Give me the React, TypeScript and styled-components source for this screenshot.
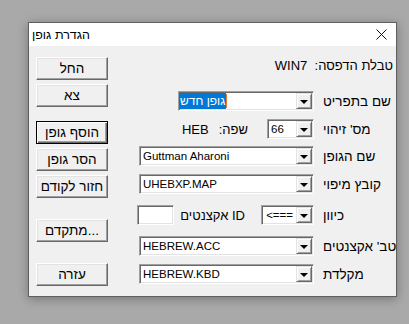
import React from "react"
import styled, { createGlobalStyle } from "styled-components"

const GlobalStyle = createGlobalStyle`
  html, body {
    margin: 0;
    padding: 0;
  }
  body {
    width: 409px;
    height: 324px;
    overflow: hidden;
    background: #a9a9a9;
    font-family: "Liberation Sans", "DejaVu Sans", sans-serif;
    color: #000;
  }
`

const Screen = styled.div`
  padding: 22px 0 0 28px;
`

const Dialog = styled.div`
  width: 369px;
  height: 275px;
  box-sizing: border-box;
  border: 1px solid #5f5f5f;
  background: #f0f0f0;
  box-shadow: 0 2px 10px rgba(0, 0, 0, 0.3);
  display: flex;
  flex-direction: column;
`

const TitleBar = styled.div`
  height: 23px;
  flex-shrink: 0;
  background: #fff;
  display: flex;
  align-items: center;
  justify-content: space-between;
  padding: 0 9px 0 3px;
`

const Title = styled.span`
  font-size: 12.5px;
`

const CloseIcon = () => (
  <svg width="11" height="11" viewBox="0 0 11 11">
    <path d="M0.5 0.5 L10.5 10.5 M10.5 0.5 L0.5 10.5" stroke="#111" strokeWidth="1" />
  </svg>
)

const Body = styled.div`
  flex: 1;
  display: flex;
`

const ButtonColumn = styled.div`
  width: 110px;
  box-sizing: border-box;
  padding: 0 0 0 7px;
  display: flex;
  flex-direction: column;
`

const Button = styled.button<{ $gap: number; $default?: boolean }>`
  width: 72px;
  height: 23px;
  margin-top: ${p => p.$gap}px;
  padding: 0;
  box-sizing: border-box;
  background: #f0f0f0;
  font-family: inherit;
  font-size: 13.5px;
  font-weight: normal;
  color: #000;
  border-style: solid;
  border-width: 1px;
  border-color: ${p => (p.$default ? "#000" : "#fff #696969 #696969 #fff")};
  box-shadow: ${p =>
    p.$default
      ? "inset 1px 1px #fff, inset -1px -1px #696969, inset -2px -2px #a0a0a0"
      : "inset -1px -1px #a0a0a0, inset 1px 1px #e3e3e3"};
`

const FormColumn = styled.div`
  flex: 1;
  box-sizing: border-box;
  padding-right: 3px;
  display: flex;
  flex-direction: column;
`

const Row = styled.div<{ $gap: number }>`
  height: 20px;
  margin-top: ${p => p.$gap}px;
  display: flex;
  align-items: center;
  justify-content: flex-end;
`

const Static = styled.span<{ $space?: number }>`
  font-size: 13px;
  white-space: nowrap;
  margin-right: ${p => p.$space ?? 0}px;
`

const Label = styled.span`
  width: 70px;
  margin-left: 9px;
  font-size: 13.5px;
  white-space: nowrap;
`

const Field = styled.div<{ $width: number; $space?: number }>`
  width: ${p => p.$width}px;
  height: 20px;
  margin-right: ${p => p.$space ?? 0}px;
  box-sizing: border-box;
  display: flex;
  align-items: center;
  background: #fff;
  border: 1px solid;
  border-color: #a0a0a0 #fff #fff #a0a0a0;
  box-shadow: inset 1px 1px #696969, inset -1px -1px #e3e3e3;
`

const FieldText = styled.span<{ $right?: boolean }>`
  flex: 1;
  padding: 0 ${p => (p.$right ? "3px" : "0")} 0 3px;
  text-align: ${p => (p.$right ? "right" : "left")};
  font-size: 11.5px;
  white-space: nowrap;
  overflow: hidden;
`

const EditArea = styled.div`
  flex: 1;
  display: flex;
  align-items: center;
`

const Selected = styled.span`
  background: #0078d7;
  color: #fff;
  padding: 1px;
  font-size: 12px;
  white-space: nowrap;
`

const Caret = styled.span`
  flex: 1;
  height: 14px;
  border-left: 1px solid #e07a2c;
`

const DropButton = styled.div`
  width: 16px;
  height: 16px;
  margin-right: 1px;
  box-sizing: border-box;
  background: #f0f0f0;
  border: 1px solid;
  border-color: #e3e3e3 #696969 #696969 #e3e3e3;
  box-shadow: inset 1px 1px #fff, inset -1px -1px #a0a0a0;
  display: flex;
  align-items: center;
  justify-content: center;
`

const Arrow = styled.span`
  width: 0;
  height: 0;
  margin-top: 1px;
  border-left: 4px solid transparent;
  border-right: 4px solid transparent;
  border-top: 4px solid #000;
`

interface ICombo {
  width: number
  value?: string
  right?: boolean
  space?: number
}
const Combo = ({ width, value, right, space }: ICombo) => (
  <Field $width={width} $space={space}>
    <FieldText $right={right}>{value}</FieldText>
    <DropButton>
      <Arrow />
    </DropButton>
  </Field>
)

export default function App() {
  return (
    <Screen>
      <GlobalStyle />
      <Dialog>
        <TitleBar>
          <Title>הגדרת גופן</Title>
          <CloseIcon />
        </TitleBar>
        <Body>
          <ButtonColumn>
            <Button $gap={11}>החל</Button>
            <Button $gap={4}>צא</Button>
            <Button $gap={14} $default>הוסף גופן</Button>
            <Button $gap={4}>הסר גופן</Button>
            <Button $gap={4}>חזור לקודם</Button>
            <Button $gap={21}>מתקדם...</Button>
            <Button $gap={21}>עזרה</Button>
          </ButtonColumn>
          <FormColumn>
            <Row $gap={9}>
              <Static dir="rtl">טבלת הדפסה:&nbsp;&nbsp;WIN7</Static>
            </Row>
            <Row $gap={16}>
              <Field $width={136}>
                <EditArea>
                  <Selected>גופן חדש</Selected>
                  <Caret />
                </EditArea>
                <DropButton>
                  <Arrow />
                </DropButton>
              </Field>
              <Label>שם בתפריט</Label>
            </Row>
            <Row $gap={8}>
              <Static $space={10}>HEB</Static>
              <Static dir="rtl" $space={19}>שפה:</Static>
              <Combo width={47} value="66" />
              <Label>מס' זיהוי</Label>
            </Row>
            <Row $gap={7}>
              <Combo width={175} value="Guttman Aharoni" />
              <Label>שם הגופן</Label>
            </Row>
            <Row $gap={8}>
              <Combo width={175} value="UHEBXP.MAP" />
              <Label>קובץ מיפוי</Label>
            </Row>
            <Row $gap={11}>
              <Field $width={37} $space={6} />
              <Static dir="rtl" $space={16}>ID אקצנטים</Static>
              <Combo width={53} value="<===" right />
              <Label>כיוון</Label>
            </Row>
            <Row $gap={11}>
              <Combo width={175} value="HEBREW.ACC" />
              <Label>טב' אקצנטים</Label>
            </Row>
            <Row $gap={8}>
              <Combo width={175} value="HEBREW.KBD" />
              <Label>מקלדת</Label>
            </Row>
          </FormColumn>
        </Body>
      </Dialog>
    </Screen>
  )
}
